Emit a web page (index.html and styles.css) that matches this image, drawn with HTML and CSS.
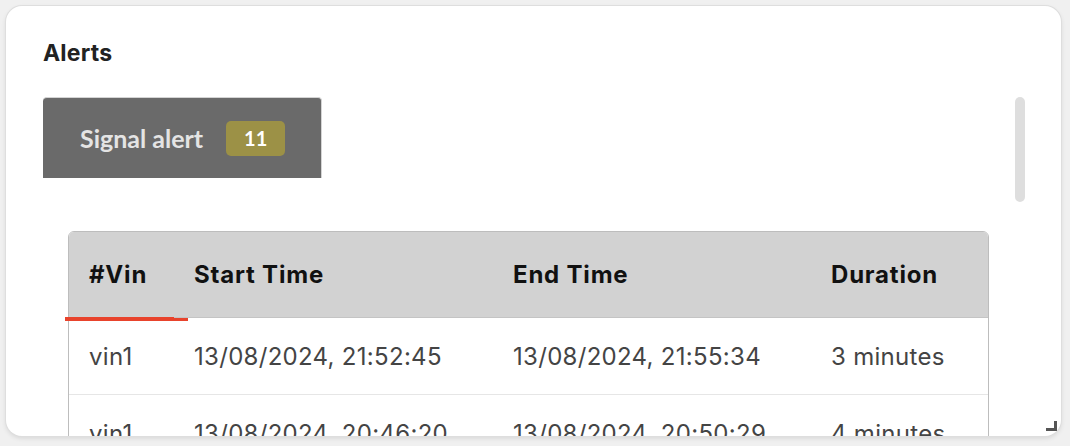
FILE: index.html
```html
<!DOCTYPE html>
<html lang="en">
<head>
    <meta charset="UTF-8">
    <meta name="viewport" content="width=device-width, initial-scale=1.0">
    <title>Alerts</title>
    <link rel="stylesheet" href="styles.css">
</head>
<body>
    <section class="card">
        <h2 class="card-title">Alerts</h2>
        <div class="scroll-wrap">
            <div class="scroll">
                <div class="tabs">
                    <button class="tab">Signal alert <span class="badge">11</span></button>
                </div>
                <table class="alerts">
                    <colgroup>
                        <col class="c-vin">
                        <col class="c-start">
                        <col class="c-end">
                        <col class="c-dur">
                    </colgroup>
                    <thead>
                        <tr>
                            <th class="sorted">#Vin</th>
                            <th>Start Time</th>
                            <th>End Time</th>
                            <th>Duration</th>
                        </tr>
                    </thead>
                    <tbody>
                        <tr><td>vin1</td><td>13/08/2024, 21:52:45</td><td>13/08/2024, 21:55:34</td><td>3 minutes</td></tr>
                        <tr><td>vin1</td><td>13/08/2024, 20:46:20</td><td>13/08/2024, 20:50:29</td><td>4 minutes</td></tr>
                        <tr><td>vin1</td><td>13/08/2024, 19:31:02</td><td>13/08/2024, 19:33:48</td><td>3 minutes</td></tr>
                        <tr><td>vin1</td><td>13/08/2024, 18:12:57</td><td>13/08/2024, 18:18:10</td><td>5 minutes</td></tr>
                        <tr><td>vin1</td><td>13/08/2024, 16:40:33</td><td>13/08/2024, 16:42:19</td><td>2 minutes</td></tr>
                        <tr><td>vin1</td><td>13/08/2024, 15:05:11</td><td>13/08/2024, 15:09:40</td><td>4 minutes</td></tr>
                        <tr><td>vin1</td><td>13/08/2024, 13:27:54</td><td>13/08/2024, 13:30:22</td><td>3 minutes</td></tr>
                        <tr><td>vin1</td><td>13/08/2024, 11:58:06</td><td>13/08/2024, 12:01:45</td><td>4 minutes</td></tr>
                        <tr><td>vin1</td><td>13/08/2024, 10:14:39</td><td>13/08/2024, 10:16:03</td><td>1 minute</td></tr>
                        <tr><td>vin1</td><td>13/08/2024, 08:49:25</td><td>13/08/2024, 08:53:50</td><td>4 minutes</td></tr>
                        <tr><td>vin1</td><td>13/08/2024, 07:22:18</td><td>13/08/2024, 07:25:07</td><td>3 minutes</td></tr>
                    </tbody>
                </table>
            </div>
            <span class="thumb"></span>
        </div>
        <span class="grip"></span>
    </section>
</body>
</html>
```

FILE: styles.css
```css
html {
    font-family: Inter, "Noto Sans", sans-serif;
    color: #222;
}
body {
    margin: 0;
    padding: 6px 9px 10px 6px;
    background: #f0f0f0;
}
.card {
    position: relative;
    display: flex;
    flex-direction: column;
    height: 430px;
    box-sizing: border-box;
    padding: 33px 33px 0 37px;
    background: #fff;
    border-radius: 16px;
    box-shadow: 0 0 0 1px #dedede, 0 2px 5px rgba(0, 0, 0, 0.12);
    overflow: hidden;
}
.card-title {
    margin: 0 0 30px;
    font-size: 23px;
    line-height: 28px;
    font-weight: 700;
    letter-spacing: 0.2px;
    color: #222;
}
.scroll-wrap {
    position: relative;
    flex: 1;
    min-height: 0;
}
.scroll {
    height: 100%;
    padding-right: 14px;
    overflow: hidden;
}
.thumb {
    position: absolute;
    top: 0;
    right: 3px;
    width: 10px;
    height: 105px;
    border-radius: 5px;
    background: #dedede;
}
.tabs {
    display: flex;
    margin-bottom: 53px;
}
.tab {
    display: flex;
    align-items: center;
    gap: 23px;
    width: 279px;
    height: 81px;
    padding: 0 0 0 37px;
    border: 0;
    border-top: 1px solid #d4d4d4;
    border-right: 1px solid #d4d4d4;
    border-radius: 4px 4px 0 0;
    background: #6a6a6a;
    color: #e4e4e4;
    font-family: Lato, sans-serif;
    font-size: 25px;
    font-weight: 700;
    text-align: left;
}
.badge {
    display: inline-flex;
    align-items: center;
    justify-content: center;
    width: 59px;
    height: 35px;
    border-radius: 5px;
    background: #9c9146;
    color: #fff;
    font-size: 20px;
}
.alerts {
    width: calc(100% - 50px);
    margin: 0 25px;
    table-layout: fixed;
    border-collapse: separate;
    border-spacing: 0;
    border: 1px solid #bdbdbd;
    border-radius: 6px 6px 0 0;
    font-size: 24px;
}
.c-vin { width: 105px; }
.c-start { width: 319px; }
.c-end { width: 318px; }
th {
    position: relative;
    height: 85px;
    padding: 0 0 0 20px;
    background: #d2d2d2;
    border-bottom: 1px solid #c4c4c4;
    text-align: left;
    font-weight: 700;
    letter-spacing: 0.8px;
    color: #111;
}
th:first-child { border-top-left-radius: 5px; }
th:last-child { border-top-right-radius: 5px; }
th.sorted::after {
    content: "";
    position: absolute;
    left: -4px;
    bottom: -4px;
    width: 123px;
    height: 4px;
    background: #e8432c;
}
td {
    height: 76px;
    padding: 0 0 0 20px;
    border-bottom: 1px solid #e6e6e6;
    color: #444;
    letter-spacing: 0.3px;
    white-space: nowrap;
}
.grip {
    position: absolute;
    right: 4px;
    bottom: 5px;
    width: 8px;
    height: 7px;
    border-right: 3px solid #555;
    border-bottom: 3px solid #555;
}
```
